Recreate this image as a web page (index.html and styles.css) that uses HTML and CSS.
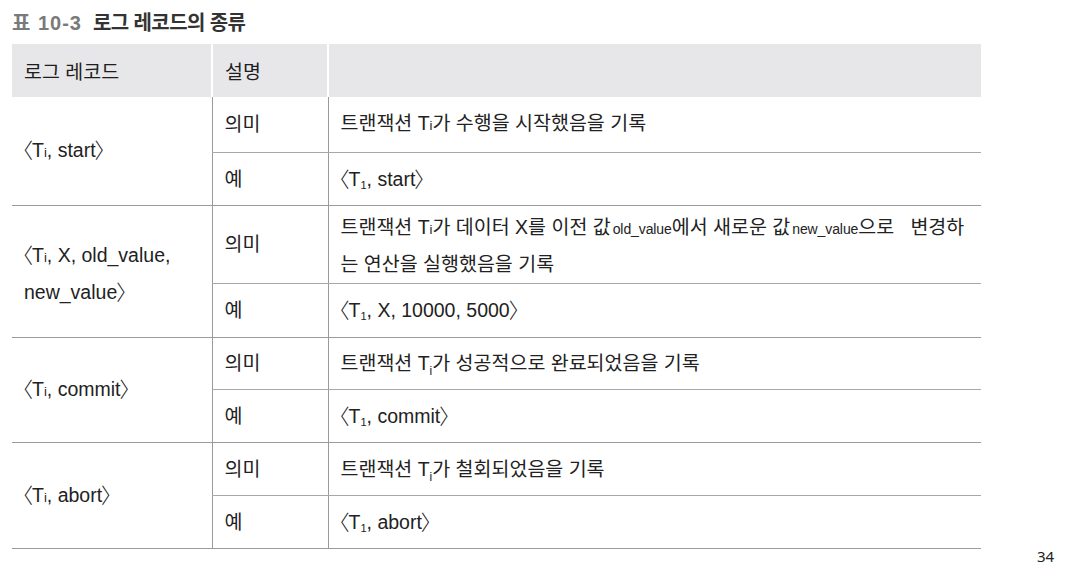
FILE: index.html
```html
<!DOCTYPE html>
<html lang="ko">
<head>
<meta charset="utf-8">
<link rel="stylesheet" href="styles.css">
</head>
<body>
<div class="page">
  <h1 class="title"><span class="num">표 10-3</span>로그 레코드의 종류</h1>
  <div class="main">
    <table class="log">
      <colgroup><col class="c1"><col class="c2"><col class="c3"></colgroup>
      <thead>
        <tr class="head"><th>로그 레코드</th><th>설명</th><th></th></tr>
      </thead>
      <tbody>
        <tr class="r55"><td rowspan="2" class="rec"><span class="bo">〈</span>T<span class="si">i</span>, start<span class="bc">〉</span></td><td>의미</td><td>트랜잭션 T<span class="si">i</span>가 수행을 시작했음을 기록</td></tr>
        <tr class="r53 gend"><td>예</td><td><span class="bo">〈</span>T<sub>1</sub>, start<span class="bc">〉</span></td></tr>
        <tr class="r78"><td rowspan="2" class="rec two"><span class="bo">〈</span>T<span class="si">i</span>, X, old_value,<br>new_value<span class="bc">〉</span></td><td>의미</td><td class="wrap">트랜잭션 T<span class="si">i</span>가 데이터 X를 이전 값<span class="small">old_value</span>에서 새로운 값<span class="small">new_value</span>으로&nbsp;&nbsp; 변경하<br>는 연산을 실행했음을 기록</td></tr>
        <tr class="r54 gend"><td>예</td><td><span class="bo">〈</span>T<sub>1</sub>, X, 10000, 5000<span class="bc">〉</span></td></tr>
        <tr class="r52"><td rowspan="2" class="rec"><span class="bo">〈</span>T<span class="si">i</span>, commit<span class="bc">〉</span></td><td>의미</td><td>트랜잭션 T<sub class="ti">i</sub>가 성공적으로 완료되었음을 기록</td></tr>
        <tr class="r53 gend"><td>예</td><td><span class="bo">〈</span>T<sub>1</sub>, commit<span class="bc">〉</span></td></tr>
        <tr class="r53"><td rowspan="2" class="rec"><span class="bo">〈</span>T<span class="si">i</span>, abort<span class="bc">〉</span></td><td>의미</td><td>트랜잭션 T<sub class="ti">i</sub>가 철회되었음을 기록</td></tr>
        <tr class="r53 gend"><td>예</td><td><span class="bo">〈</span>T<sub>1</sub>, abort<span class="bc">〉</span></td></tr>
      </tbody>
    </table>
    <div class="pageno">34</div>
  </div>
</div>
</body>
</html>
```

FILE: styles.css
```css
html, body {
  margin: 0;
  padding: 0;
  background: #ffffff;
}
body {
  font-family: "Liberation Sans", "Noto Sans CJK KR", sans-serif;
  color: #222222;
  width: 1074px;
  height: 565px;
  overflow: hidden;
}
.page {
  padding: 11px 0 0 12px;
}
.title {
  margin: 0;
  height: 33px;
  font-size: 20px;
  font-weight: 700;
  line-height: 24px;
  color: #333333;
  letter-spacing: -0.6px;
}
.title .num {
  color: #7a7a7a;
  margin-right: 11px;
  letter-spacing: 1px;
}
.main {
  display: flex;
  align-items: flex-end;
}
.log {
  border-collapse: collapse;
  width: 969px;
  table-layout: fixed;
  font-size: 19.5px;
  letter-spacing: 0;
}
.c1 { width: 200px; }
.c2 { width: 116px; }
.c3 { width: 653px; }
.log th {
  background: #e7e7e9;
  height: 53px;
  padding: 0 12px;
  text-align: left;
  font-weight: 400;
  color: #1e1e1e;
  border-left: 2px solid #ffffff;
  box-sizing: border-box;
}
.log th:first-child {
  border-left: none;
}
.log td {
  padding: 0 12px;
  vertical-align: middle;
  border-left: 1px solid #9b9b9b;
  border-bottom: 1px solid #a8a8a8;
  color: #222222;
  line-height: 22px;
}
.log td.rec {
  border-left: none;
  border-bottom: 1px solid #9b9b9b;
  padding-top: 2px;
}
.log td.rec.two {
  line-height: 34px;
  padding-top: 4px;
}
.log tr.gend td {
  border-bottom: 1px solid #9b9b9b;
}
.log td.wrap {
  line-height: 35px;
  padding-top: 3px;
}
.r55 { height: 55px; }
.r53 { height: 53px; }
.r54 { height: 54px; }
.r52 { height: 52px; }
.r78 { height: 78px; }
.bo, .bc {
  font-family: "Noto Sans CJK KR", sans-serif;
  font-weight: 300;
  font-size: 21px;
  line-height: 0;
  vertical-align: -1px;
}
.bo {
  margin-left: -12px;
  margin-right: -1px;
}
.bc {
  margin-right: -12px;
  margin-left: -1px;
}
.si {
  font-size: 13px;
}
sub {
  font-size: 11px;
  vertical-align: -3px;
  line-height: 0;
}
sub.ti {
  font-size: 12px;
  vertical-align: -5px;
}
.small {
  font-size: 14px;
  letter-spacing: -0.1px;
  margin-left: 2px;
}
.pageno {
  font-family: "Noto Sans", "Liberation Sans", sans-serif;
  font-size: 15px;
  color: #222222;
  margin-left: 56px;
  margin-bottom: -17px;
}
```
